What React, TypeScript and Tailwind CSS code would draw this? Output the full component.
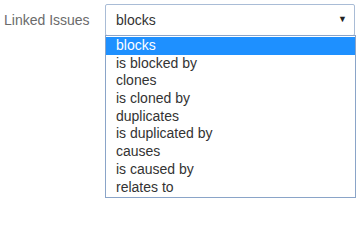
const options = [
  "blocks",
  "is blocked by",
  "clones",
  "is cloned by",
  "duplicates",
  "is duplicated by",
  "causes",
  "is caused by",
  "relates to",
];

export default function App() {
  const selected = "blocks";

  return (
    <div className="w-[357px] h-[201px] bg-white font-['Liberation_Sans',Arial,sans-serif] text-[14px] overflow-hidden">
      {/* Field row */}
      <div className="flex items-center pt-[4px]">
        <label className="w-[105px] pl-[4px] text-[#6b6b6b]">Linked Issues</label>
        <div className="relative">
          <div className="flex items-center justify-between w-[250px] h-[32px] pl-[10px] pr-[7px] border border-[#a9bcd6] rounded-[2px] text-[#333]">
            <span>{selected}</span>
            <span className="text-[9px] text-[#222]">▼</span>
          </div>

          {/* Open option list */}
          <ul className="absolute left-0 top-[31px] w-[251px] border border-[#8aa4c8] bg-white py-[1px]">
            {options.map((opt) => (
              <li
                key={opt}
                className={`h-[17.7px] leading-[17.7px] pl-[10px] ${
                  opt === selected ? "bg-[#1e90ff] text-white" : "text-[#333]"
                }`}
              >
                {opt}
              </li>
            ))}
          </ul>
        </div>
      </div>
    </div>
  );
}
